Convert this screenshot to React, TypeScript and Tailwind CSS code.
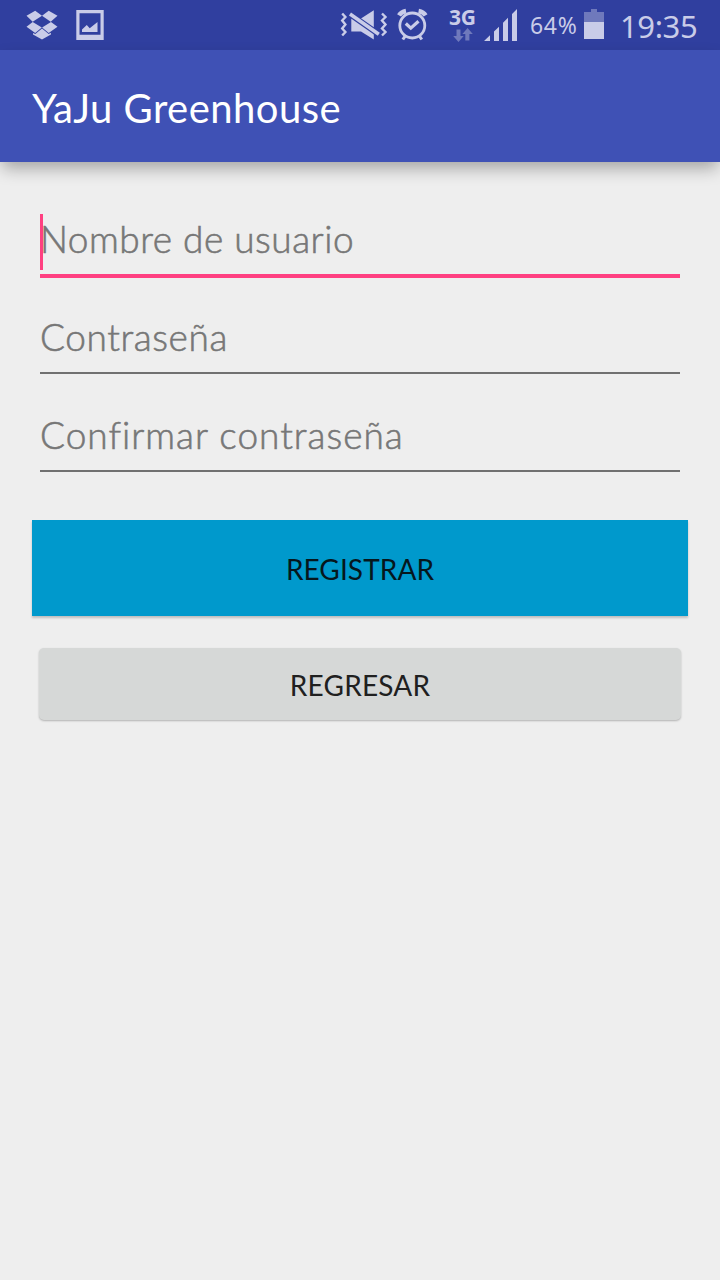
import React from "react";

function Dropbox() {
  return (
    <svg className="ml-[26px] mt-[10px] h-[30px] w-8 shrink-0" viewBox="26 10 32 30" fill="#c9cce8">
      <path d="M26.5 15.8 35.2 10.8 42 15.8 32.7 21.7ZM42 15.8 48.7 10.8 57.5 15.8 50.7 21.7ZM26.5 26.8 32.7 22 41.8 27.6 35.2 33ZM42.1 27.6 51 22 57.5 26.8 48.7 33Z" />
      <path d="M33 32.9 35.3 34 42 28.6 48.7 34 50.9 32.8V34.4L42 39.6 33 34.4Z" />
    </svg>
  );
}

function Picture() {
  return (
    <svg className="ml-[18px] mt-[10px] h-[30px] w-7 shrink-0" viewBox="76 10 28 30" fill="#c9cce8">
      <path fillRule="evenodd" d="M76.3 10H103.7V40H76.3ZM79.5 13.2V34.8H100.5V13.2Z" />
      <path d="M82 32V29.5L86.8 25 89.7 28.2 97.5 22V32Z" />
    </svg>
  );
}

function Muted() {
  return (
    <svg className="ml-[236px] mt-[8px] h-8 w-12 shrink-0" viewBox="340 8 48 32">
      <path fill="#c9cce8" d="M351.3 18.5H361L373.8 10.2V39.5L361 31.4H351.3Z" />
      <path stroke="#303f9f" strokeWidth="6" d="M348.5 13.1 380 35.1" />
      <path stroke="#c9cce8" strokeWidth="3.6" d="M350 14.1 378.8 34.2" />
      <path fill="none" stroke="#c9cce8" strokeWidth="2.4" d="M342.2 13.5 345.4 17 342.2 20.5 345.4 24.5 342.2 28.5 345.4 32 342.2 35.5M382 13.5 385.5 17 382 20.5 385.5 24.5 382 28.5 385.5 32 382 35.5" />
    </svg>
  );
}

function Alarm() {
  return (
    <svg className="ml-[9px] mt-[8px] h-[34px] w-8 shrink-0" viewBox="397 8 32 34" fill="none" stroke="#c9cce8">
      <circle cx="412.3" cy="25.5" r="12.5" strokeWidth="2.8" />
      <path strokeWidth="3.2" d="M405.8 23.5 410.8 28.2 418.5 21.3" />
      <path strokeWidth="4.4" d="M399 15.4Q401 11.9 406 11M418.6 11Q423.6 11.9 425.6 15.4" />
      <path strokeWidth="3" d="M405 36.3 402.8 39.5M419.6 36.3 421.8 39.5" />
    </svg>
  );
}

function Signal() {
  return (
    <svg className="ml-[8px] mt-[8px] h-[34px] w-[34px] shrink-0" viewBox="484 8 34 34" fill="#c9cce8">
      <path d="M484 41 490 35.2V41ZM494 41V31.5L499 26.7V41ZM503 41V22.7L508 17.8V41ZM512 41V14L517 9V41Z" />
    </svg>
  );
}

function Battery() {
  return (
    <svg className="ml-[7px] mt-[9px] h-[30px] w-5 shrink-0" viewBox="584 9 20 30">
      <path fill="#6f79bc" d="M584 12H591V9H597V12H604V22H584Z" />
      <path fill="#c9cce8" d="M584 22H604V39H584Z" />
    </svg>
  );
}

function StatusBar() {
  return (
    <div className="flex h-[50px] items-start bg-[#303f9f] text-[#c9cce8]">
      <Dropbox />
      <Picture />
      <Muted />
      <Alarm />
      <div className="ml-[19px] flex w-7 shrink-0 flex-col pt-[8px]">
        <span className="ml-px h-[20px] whitespace-nowrap text-[21px] leading-[18px] font-bold tracking-[-0.3px]">3G</span>
        <svg className="ml-[5px] h-[14px] w-5" viewBox="453 28 20 14" fill="#6f79bc">
          <path d="M456.5 29.5H460.5V36H463.7L458.5 42 453.2 36H456.5ZM465.3 40.5V34H462.4L467.6 28 472.8 34H469.4V40.5Z" />
        </svg>
      </div>
      <Signal />
      <span className="ml-[12px] mt-[8px] w-[47px] shrink-0 whitespace-nowrap text-[23px] leading-[35px] tracking-[0.7px]">64%</span>
      <Battery />
      <span className="ml-[16px] mt-[6px] whitespace-nowrap text-[31px] leading-10 tracking-[-0.4px]">19:35</span>
    </div>
  );
}

interface FieldProps {
  label: string;
  spacing: string;
  active?: boolean;
}

function Field({ label, spacing, active = false }: FieldProps) {
  return (
    <label
      className={
        active
          ? "relative -mb-[2px] flex h-16 items-start border-b-4 border-[#ff4081]"
          : "relative flex h-[62px] items-start border-b-2 border-[#707070]"
      }
    >
      {active && <span className="absolute left-0 top-0 h-14 w-[3px] bg-[#ff4081]" />}
      <span
        className={`whitespace-nowrap font-['Lato'] text-[37px] leading-[50px] font-light text-[#777777] [-webkit-text-stroke:0.6px_#777777] ${spacing}`}
      >
        {label}
      </span>
    </label>
  );
}

export default function App() {
  return (
    <div className="flex h-[1280px] w-[720px] flex-col overflow-hidden bg-[#eeeeee] font-['Noto_Sans','Open_Sans',sans-serif]">
      <StatusBar />
      <header className="flex h-28 items-center bg-[#3f51b5] pl-8 shadow-[0_8px_16px_-2px_rgba(0,0,0,0.32)]">
        <h1 className="whitespace-nowrap pt-[4px] font-['Lato'] text-[40px] leading-[56px] tracking-[0.45px] text-white">
          YaJu Greenhouse
        </h1>
      </header>
      <main className="flex flex-col px-8 pt-[52px]">
        <div className="flex flex-col gap-[36px] px-2">
          <Field label="Nombre de usuario" spacing="tracking-[0.5px]" active />
          <Field label="Contraseña" spacing="tracking-[0.6px]" />
          <Field label="Confirmar contraseña" spacing="tracking-[1px]" />
        </div>
        <button className="mt-12 h-24 bg-[#0099cc] pt-[2px] font-['Lato'] text-[28px] tracking-[0.1px] text-[#06171d] shadow-[0_2px_2px_rgba(0,0,0,0.2)]">
          REGISTRAR
        </button>
        <button className="mx-[7px] mt-8 h-[72px] rounded-[5px] bg-[#d6d8d7] pt-[2px] font-['Lato'] text-[28px] tracking-[0.2px] text-[#202020] shadow-[0_1px_2px_rgba(0,0,0,0.25)]">
          REGRESAR
        </button>
      </main>
    </div>
  );
}
